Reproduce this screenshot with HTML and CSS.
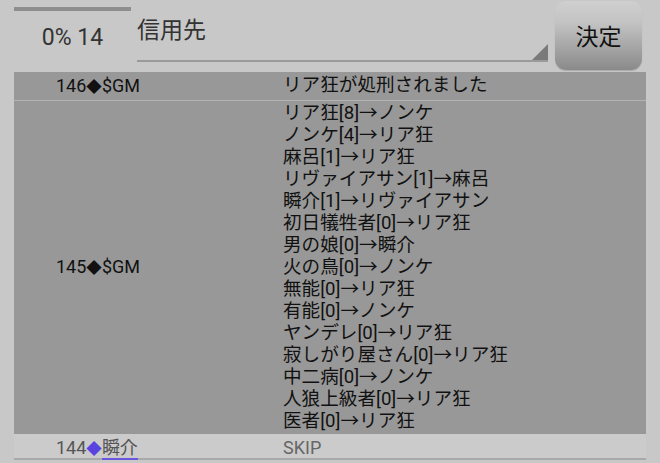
FILE: index.html
```html
<!DOCTYPE html>
<html lang="ja">
<head>
<meta charset="utf-8">
<link rel="stylesheet" href="styles.css">
</head>
<body>
<header class="top">
  <div class="progress">
    <div class="bar"></div>
    <div class="pct">0% 14</div>
  </div>
  <div class="select">
    <span class="sel-text">信用先</span>
    <i class="tri"></i>
  </div>
  <button class="ok">決定</button>
</header>
<div class="log">
  <div class="row dark sep">
    <div class="who">146<span class="dia">◆</span>$GM</div>
    <div class="msg">リア狂が処刑されました</div>
  </div>
  <div class="row dark tall">
    <div class="who mid">145<span class="dia">◆</span>$GM</div>
    <div class="msg">
      <div>リア狂[8]→ノンケ</div>
      <div>ノンケ[4]→リア狂</div>
      <div>麻呂[1]→リア狂</div>
      <div>リヴァイアサン[1]→麻呂</div>
      <div>瞬介[1]→リヴァイアサン</div>
      <div>初日犠牲者[0]→リア狂</div>
      <div>男の娘[0]→瞬介</div>
      <div>火の鳥[0]→ノンケ</div>
      <div>無能[0]→リア狂</div>
      <div>有能[0]→ノンケ</div>
      <div>ヤンデレ[0]→リア狂</div>
      <div>寂しがり屋さん[0]→リア狂</div>
      <div>中二病[0]→ノンケ</div>
      <div>人狼上級者[0]→リア狂</div>
      <div>医者[0]→リア狂</div>
    </div>
  </div>
  <div class="row light">
    <div class="who">144<span class="dia blue">◆</span><span class="name">瞬介</span></div>
    <div class="msg">SKIP</div>
  </div>
</div>
</body>
</html>
```
FILE: styles.css
```css
html, body {
  margin: 0;
  padding: 0;
}
body {
  background: #c8c8c8;
  font-family: Roboto, "Noto Sans CJK JP", sans-serif;
  color: #111;
  width: 660px;
  height: 463px;
  overflow: hidden;
}
.top {
  display: flex;
  align-items: flex-start;
  height: 72px;
  padding-left: 14px;
  box-sizing: border-box;
}
.progress {
  width: 117px;
  padding-top: 7px;
}
.bar {
  height: 4px;
  background: #8e8e8e;
}
.pct {
  margin-top: 13px;
  text-align: center;
  font-size: 23px;
  line-height: 28px;
  color: #333;
}
.select {
  position: relative;
  margin-left: 6px;
  width: 411px;
  height: 62px;
  box-sizing: border-box;
  border-bottom: 2px solid #9a9a9a;
  padding-top: 17px;
}
.sel-text {
  font-size: 23px;
  line-height: 28px;
  color: #333;
}
.tri {
  position: absolute;
  right: 0;
  bottom: 0;
  width: 0;
  height: 0;
  border-style: solid;
  border-width: 0 0 16px 16px;
  border-color: transparent transparent #7a7a7a transparent;
}
.ok {
  margin-left: 7px;
  margin-top: 1px;
  width: 87px;
  height: 69px;
  border: none;
  border-radius: 11px;
  background: linear-gradient(#cfcfcf, #c4c4c4 30%, #8a8a8a);
  font-family: Roboto, "Noto Sans CJK JP", sans-serif;
  font-size: 23px;
  color: #111;
  padding: 0 0 2px 0;
  box-shadow: 0 1px 1px rgba(0,0,0,0.15);
}
.log {
  margin: 0 14px;
  width: 632px;
}
.row {
  display: grid;
  grid-template-columns: 269px 1fr;
  font-size: 18px;
}
.msg {
  font-size: 18.6px;
}
.who {
  padding-left: 42px;
}
.dia {
  font-size: 15.5px;
}
.dark {
  background: #989898;
}
.sep {
  padding: 2px 0 1px;
  line-height: 23px;
  border-bottom: 1px solid #b3b3b3;
}
.tall {
  padding: 1px 0 2px;
  line-height: 22px;
}
.mid {
  align-self: center;
}
.light {
  background: #cbcbcb;
  color: #555;
  padding: 3px 0 0;
  height: 26px;
  box-sizing: border-box;
  line-height: 22px;
  border-bottom: 2px solid #a9a9a9;
}
.light .msg {
  color: #666;
  font-size: 18px;
}
.blue {
  color: #5a44e0;
}
.name {
  border-bottom: 2px solid #6a55e0;
}
```
